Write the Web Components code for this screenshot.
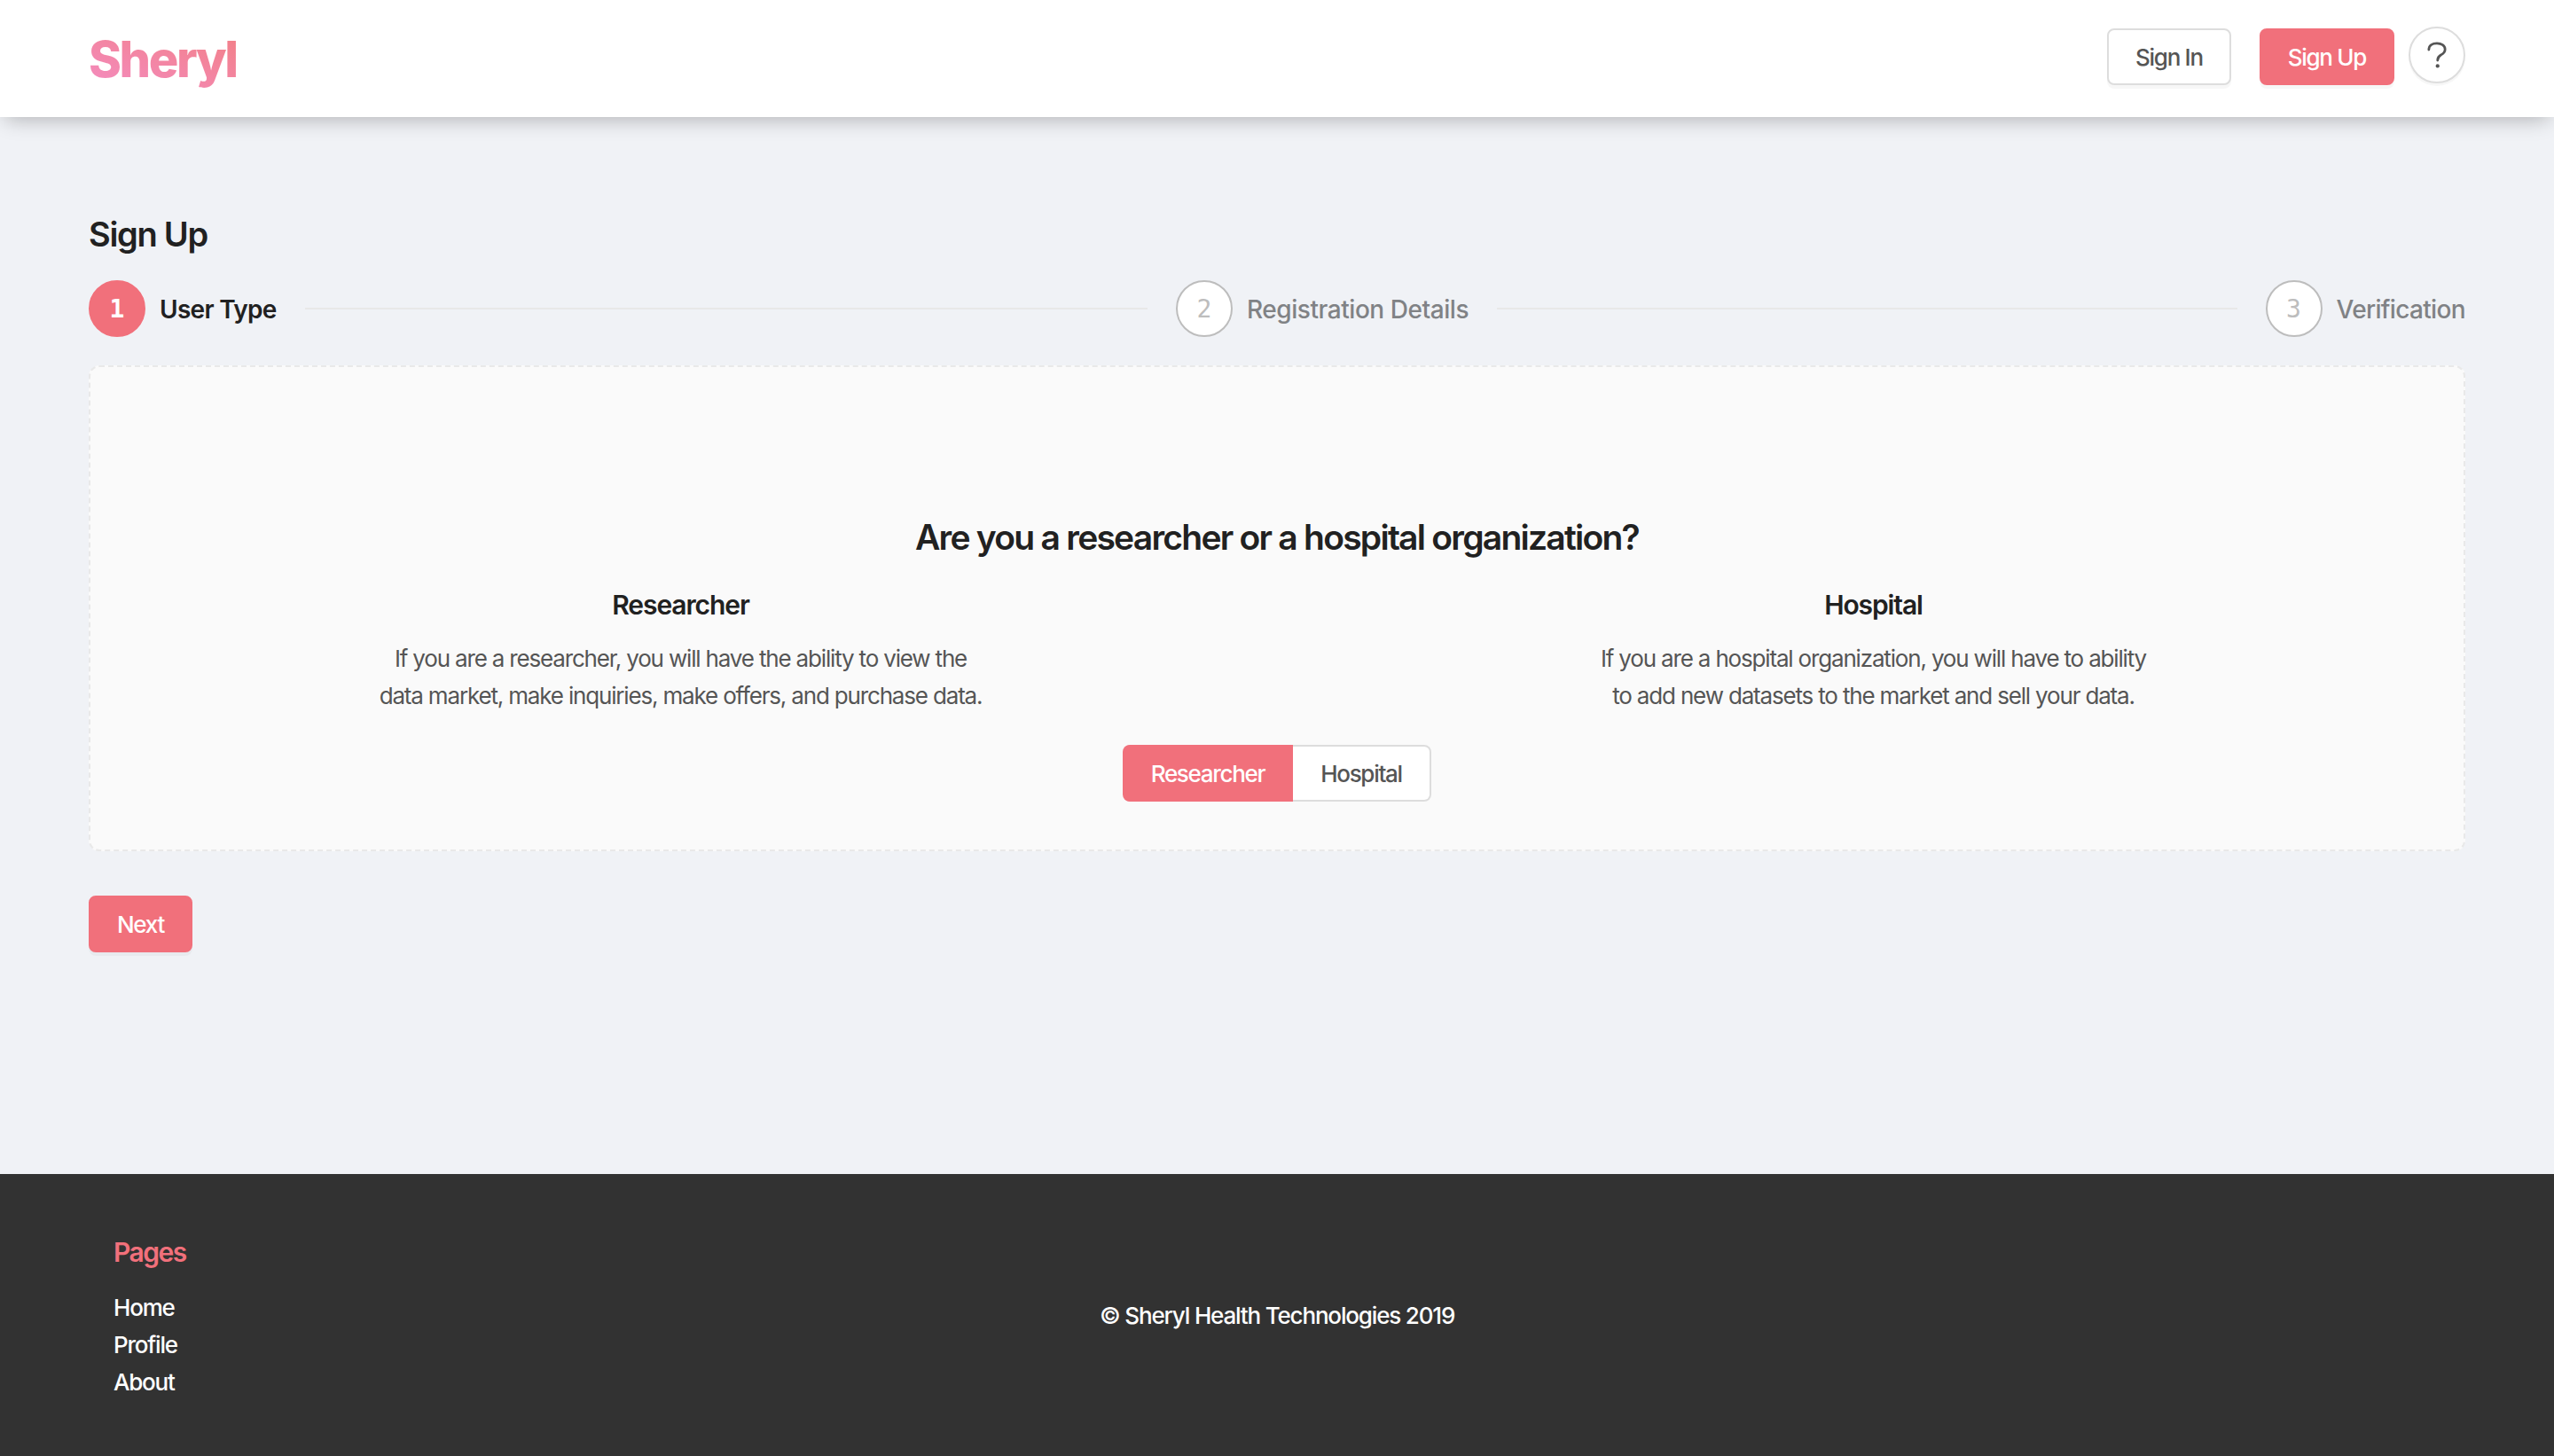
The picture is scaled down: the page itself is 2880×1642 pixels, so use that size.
<!DOCTYPE html>
<html><head><meta charset="utf-8"><style>
html,body{margin:0;padding:0}
body{width:2880px;height:1642px;background:#f0f2f6;font-family:Inter,"Liberation Sans",sans-serif;color:#212121;display:flex;flex-direction:column;overflow:hidden}
s-main{flex:1}
</style></head><body>
<s-header></s-header>
<s-main>
  <s-steps>
    <s-step n="1" state="active" style="flex:0 0 1226px">User Type</s-step>
    <s-step n="2" style="flex:0 0 1228.5px">Registration Details</s-step>
    <s-step n="3" last style="letter-spacing:-.68px">Verification</s-step>
  </s-steps>
  <s-card></s-card>
  <s-btn primary style="margin-top:50px">Next</s-btn>
</s-main>
<s-footer></s-footer>
<script>
const def=(n,css,html)=>customElements.define(n,class extends HTMLElement{connectedCallback(){if(this.shadowRoot)return;const r=this.attachShadow({mode:'open'});r.innerHTML='<style>'+css+'</style>'+(typeof html=='function'?html(this):html)}});
def('s-btn',`:host{display:inline-flex;align-items:center;justify-content:center;box-sizing:border-box;height:64px;padding:0 30px;border-radius:8px;font-size:26px;font-weight:500;letter-spacing:-1.3px;background:#fff;color:#555;border:2px solid #ddd;box-shadow:0 4px 0 rgba(0,0,0,.03)}
:host([primary]){background:#f1707b;border-color:#f1707b;color:#fff}`,'<slot></slot>');
def('s-header',`:host{display:flex;align-items:center;height:132px;padding:0 100px;background:#fff;box-shadow:0 8px 22px -6px rgba(0,0,0,.28);position:relative}
.logo{font-size:56px;font-weight:800;letter-spacing:-2.4px;background:linear-gradient(20deg,#f48cc0,#f27f85);-webkit-background-clip:text;background-clip:text;color:transparent;margin-right:auto;margin-top:2px}
s-btn{margin-top:-4px}
s-btn+s-btn{margin-left:32px}
.help{box-sizing:border-box;width:64px;height:64px;margin:-8px 0 0 16px;border:2px solid #ddd;border-radius:50%;background:#fff;box-shadow:0 3px 0 rgba(0,0,0,.03);display:flex;align-items:center;justify-content:center}`,
`<div class="logo">Sheryl</div><s-btn>Sign In</s-btn><s-btn primary>Sign Up</s-btn><div class="help"><svg width="26" height="33" viewBox="0 0 28 36" fill="none"><path d="M4 11C4 5.500 8.500 3 14 3s10 3 10 7.500c0 4-2.700 5.500-5.200 7-2.500 1.500-4 3-4 6.500" stroke="#555" stroke-width="3" stroke-linecap="round"/><circle cx="14.800" cy="31" r="2.300" fill="#555"/></svg></div>`);
def('s-main',`:host{display:block;padding:0 100px}h1{font-size:38px;font-weight:600;letter-spacing:-1.3px;line-height:48px;margin:108px 0 28px}`,`<h1>Sign Up</h1><slot></slot>`);
def('s-steps',`:host{display:flex;align-items:center;height:64px;margin-bottom:32px}`,'<slot></slot>');
def('s-step',`:host{display:flex;align-items:center;font-size:28px;font-weight:500;color:#808285;letter-spacing:-.45px}
:host([state=active]){color:#212121;font-weight:600;letter-spacing:-.7px}
.c{box-sizing:border-box;flex:none;width:64px;height:64px;border-radius:50%;border:2px solid #bdbdbd;background:#fff;color:#bdbdbd;font:400 28px "DejaVu Sans Mono",monospace;letter-spacing:0;display:flex;align-items:center;justify-content:center;margin-right:16px}
:host([state=active]) .c{background:#f1707b;border-color:#f1707b;color:#fff;font-weight:700}
.l{flex:1;height:2px;background:#e8e8e8;margin:0 32px}
:host([last]) .l{display:none}
.t{white-space:nowrap;padding-top:2px}`,el=>`<div class="c">${el.getAttribute('n')}</div><span class="t"><slot></slot></span><div class="l"></div>`);
def('s-col',`:host{display:block;flex:1;text-align:center}
h3{font-size:30px;font-weight:600;letter-spacing:-1.1px;line-height:40px;margin:0 0 20px}
p{font-size:26px;line-height:42px;color:#555;margin:0;letter-spacing:-1.17px}`,
el=>`<h3>${el.getAttribute('t')}</h3><p><slot></slot></p>`);
def('s-card',`:host{display:block;box-sizing:border-box;height:548px;background:#fafafa;border:2px dashed #e9e9e9;border-radius:12px;padding:164px 0 0;text-align:center}
h2{font-size:39px;font-weight:600;letter-spacing:-1.75px;line-height:56px;margin:0 0 28px}
.row{display:flex;margin:0 -7px}
.tog{display:inline-flex;margin-top:34px;height:64px;font-size:26px;letter-spacing:-1.3px;font-weight:500}
.a{box-sizing:border-box;width:192px;background:#f1707b;color:#fff;border-radius:8px 0 0 8px;display:flex;align-items:center;justify-content:center}
.b{box-sizing:border-box;width:156px;background:#fff;color:#555;border:2px solid #ddd;border-left:0;border-radius:0 8px 8px 0;display:flex;align-items:center;justify-content:center}`,
`<h2>Are you a researcher or a hospital organization?</h2><div class="row"><s-col t="Researcher">If you are a researcher, you will have the ability to view the<br>data market, make inquiries, make offers, and purchase data.</s-col><s-col t="Hospital">If you are a hospital organization, you will have to ability<br>to add new datasets to the market and sell your data.</s-col></div><div class="tog"><div class="a">Researcher</div><div class="b">Hospital</div></div>`);
def('s-footer',`:host{display:flex;box-sizing:border-box;height:318px;background:#323232;color:#fff;padding:68px 0 0 128px;font-size:26px;font-weight:500;letter-spacing:-1.2px}
h4{margin:0 0 22px;font-size:30px;line-height:40px;font-weight:600;color:#f1707b;letter-spacing:-1.5px}
.l{line-height:42px}
.pages{width:1112px}
.c{margin-top:72px;line-height:40px;letter-spacing:-1.17px}`,
`<div class="pages"><h4>Pages</h4><div class="l">Home</div><div class="l">Profile</div><div class="l">About</div></div><div class="c">© Sheryl Health Technologies 2019</div>`);
</script>
</body></html>
